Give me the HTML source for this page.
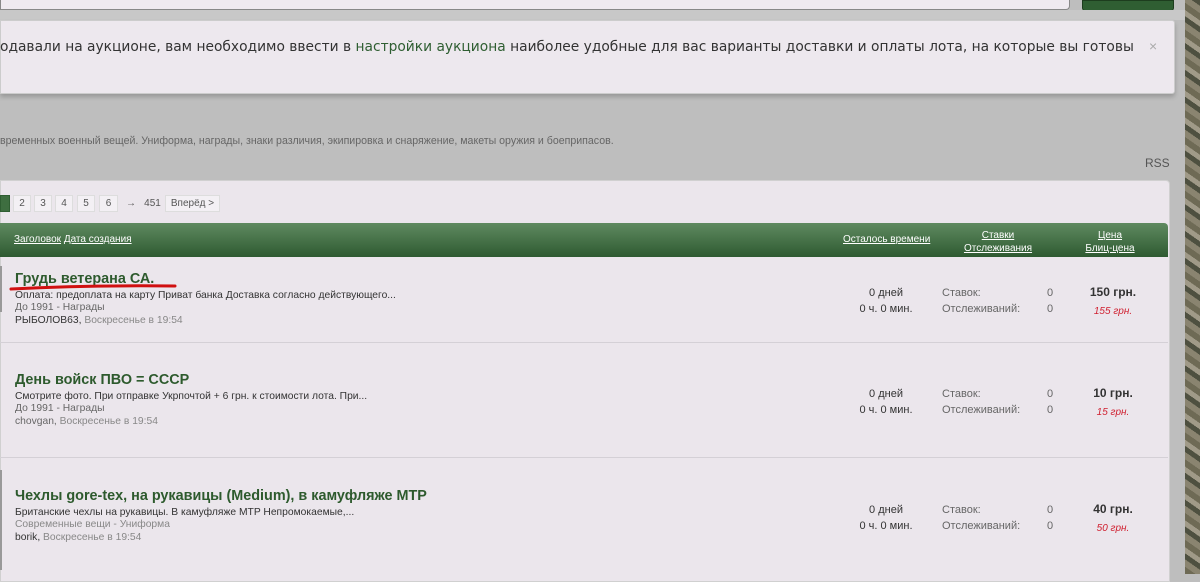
<!DOCTYPE html>
<html><head><meta charset="utf-8"><style>
body{margin:0;width:1200px;height:574px;overflow:hidden;background:#bebebe;font-family:"Liberation Sans","DejaVu Sans",sans-serif;position:relative}
.abs{position:absolute}
.camo{left:1185px;top:0;width:15px;height:574px;background:repeating-linear-gradient(35deg,#6e6a55 0 6px,#8a8470 6px 12px,#4e5040 12px 17px,#a09a88 17px 22px)}
.u{text-decoration:underline;color:#fff}
.t{font-size:10.3px;color:#333}
.g{color:#888}
.title{font-weight:bold;font-size:14.4px;color:#2d5a2d}
.pg{position:absolute;top:0;height:15px;line-height:15px;text-align:center;background:#f3f0f4;border:1px solid #ddd;font-size:10px;color:#555;display:block}
</style></head><body>
<div class="camo abs"></div>
<div class="abs" style="left:0;top:0;width:1068px;height:9px;background:#efeaf0;border:1px solid #888;border-top:none;border-radius:0 0 4px 0"></div>
<div class="abs" style="left:1082px;top:0;width:90px;height:9px;background:#2f5e32;border:1px solid #1d3d1e;border-radius:0 0 3px 3px"></div>
<div class="abs" style="left:0;top:10px;width:1185px;height:10px;background:#c8c8c8"></div>
<div class="abs" style="left:0;top:20px;width:1173px;height:72px;background:#ede8ee;border:1px solid #ccc;border-radius:0 3px 3px 0;box-shadow:0 3px 5px rgba(0,0,0,.2)"></div>
<div class="abs" style="left:0;top:39px;font-family:'DejaVu Sans',sans-serif;font-size:13.8px;color:#333;white-space:nowrap">одавали на аукционе, вам необходимо ввести в <span style="color:#2f5e32">настройки аукциона</span> наиболее удобные для вас варианты доставки и оплаты лота, на которые вы готовы</div>
<div class="abs" style="left:1149px;top:38px;font-size:14px;color:#aaa">×</div>
<div class="abs" style="left:0;top:135px;font-size:10.6px;color:#666;white-space:nowrap">временных военный вещей. Униформа, награды, знаки различия, экипировка и снаряжение, макеты оружия и боеприпасов.</div>
<div class="abs" style="left:1145px;top:156px;font-size:12px;color:#555">RSS</div>
<div class="abs" style="left:0;top:180px;width:1168px;height:400px;background:#ebe6ec;border:1px solid #d0d0d0;border-radius:0 4px 0 0"></div>
<div class="abs" style="left:0;top:195px;width:300px;height:18px">
<span class="pg" style="left:0;width:8px;background:#3e6e40;border-color:#2f5e32"></span>
<span class="pg" style="left:13px;width:16px">2</span>
<span class="pg" style="left:34px;width:16px">3</span>
<span class="pg" style="left:55px;width:16px">4</span>
<span class="pg" style="left:77px;width:16px">5</span>
<span class="pg" style="left:99px;width:17px">6</span>
<span class="pg" style="left:124px;width:12px;background:none;border-color:transparent">→</span>
<span class="pg" style="left:142px;width:19px;background:none;border-color:transparent">451</span>
<span class="pg" style="left:165px;width:53px">Вперёд &gt;</span>
</div>
<div class="abs" style="left:0;top:223px;width:1168px;height:34px;background:linear-gradient(#5f8a60,#2e5a31);border-radius:0 4px 0 0"></div>
<div class="abs" style="left:14px;top:234px;font-size:10px"><span class="u">Заголовок</span> <span class="u">Дата создания</span></div>
<div class="abs" style="left:843px;top:234px;font-size:10px"><span class="u">Осталось времени</span></div>
<div class="abs" style="left:953px;top:229px;width:90px;text-align:center;font-size:10px;line-height:13px"><span class="u">Ставки</span><br><span class="u">Отслеживания</span></div>
<div class="abs" style="left:1075px;top:229px;width:70px;text-align:center;font-size:10px;line-height:13px"><span class="u">Цена</span><br><span class="u">Блиц-цена</span></div>
<div class="abs" style="left:0;top:342px;width:1168px;height:1px;background:#d4d0d6"></div>
<div class="abs" style="left:0;top:457px;width:1168px;height:1px;background:#d4d0d6"></div>
<div class="abs" style="left:0;top:266px;width:2px;height:46px;background:#999"></div>
<div class="abs" style="left:0;top:470px;width:2px;height:100px;background:#999"></div>

<div class="abs" style="left:15px;top:273px;line-height:12.5px">
<div class="title" style="margin-bottom:4px">Грудь ветерана СА.</div>
<div class="t">Оплата: предоплата на карту Приват банка Доставка согласно действующего...</div>
<div class="t g" style="color:#666">До 1991 - Награды</div>
<div class="t">РЫБОЛОВ63, <span class="g">Воскресенье в 19:54</span></div></div>
<svg class="abs" style="left:8px;top:283px" width="170" height="10"><path d="M3 6 Q80 2 167 3" stroke="#d01010" stroke-width="3" fill="none" stroke-linecap="round"/></svg>

<div class="abs" style="left:15px;top:374px;line-height:12.5px">
<div class="title" style="margin-bottom:4px">День войск ПВО = СССР</div>
<div class="t">Смотрите фото. При отправке Укрпочтой + 6 грн. к стоимости лота. При...</div>
<div class="t" style="color:#666">До 1991 - Награды</div>
<div class="t" style="color:#666">chovgan, <span class="g">Воскресенье в 19:54</span></div></div>

<div class="abs" style="left:15px;top:490px;line-height:12.5px">
<div class="title" style="margin-bottom:4px">Чехлы gore-tex, на рукавицы (Medium), в камуфляже MTP</div>
<div class="t">Британские чехлы на рукавицы. В камуфляже MTP Непромокаемые,...</div>
<div class="t" style="color:#888">Современные вещи - Униформа</div>
<div class="t">borik, <span class="g">Воскресенье в 19:54</span></div></div>

<div class="abs" style="left:850px;top:285px;width:72px;text-align:center;font-size:11px;line-height:16px;color:#333">0 дней<br>0 ч. 0 мин.</div>
<div class="abs" style="left:942px;top:285px;font-size:11px;line-height:16px;color:#666">Ставок:<br>Отслеживаний:</div>
<div class="abs" style="left:1047px;top:285px;font-size:11px;line-height:16px;color:#666">0<br>0</div>
<div class="abs" style="left:1080px;top:283px;width:66px;text-align:center;line-height:17px"><b style="font-size:12px;color:#333">150 грн.</b><br><i style="font-size:10px;color:#d02030">155 грн.</i></div>

<div class="abs" style="left:850px;top:386px;width:72px;text-align:center;font-size:11px;line-height:16px;color:#333">0 дней<br>0 ч. 0 мин.</div>
<div class="abs" style="left:942px;top:386px;font-size:11px;line-height:16px;color:#666">Ставок:<br>Отслеживаний:</div>
<div class="abs" style="left:1047px;top:386px;font-size:11px;line-height:16px;color:#666">0<br>0</div>
<div class="abs" style="left:1080px;top:384px;width:66px;text-align:center;line-height:17px"><b style="font-size:12px;color:#333">10 грн.</b><br><i style="font-size:10px;color:#d02030">15 грн.</i></div>

<div class="abs" style="left:850px;top:502px;width:72px;text-align:center;font-size:11px;line-height:16px;color:#333">0 дней<br>0 ч. 0 мин.</div>
<div class="abs" style="left:942px;top:502px;font-size:11px;line-height:16px;color:#666">Ставок:<br>Отслеживаний:</div>
<div class="abs" style="left:1047px;top:502px;font-size:11px;line-height:16px;color:#666">0<br>0</div>
<div class="abs" style="left:1080px;top:500px;width:66px;text-align:center;line-height:17px"><b style="font-size:12px;color:#333">40 грн.</b><br><i style="font-size:10px;color:#d02030">50 грн.</i></div>
</body></html>
